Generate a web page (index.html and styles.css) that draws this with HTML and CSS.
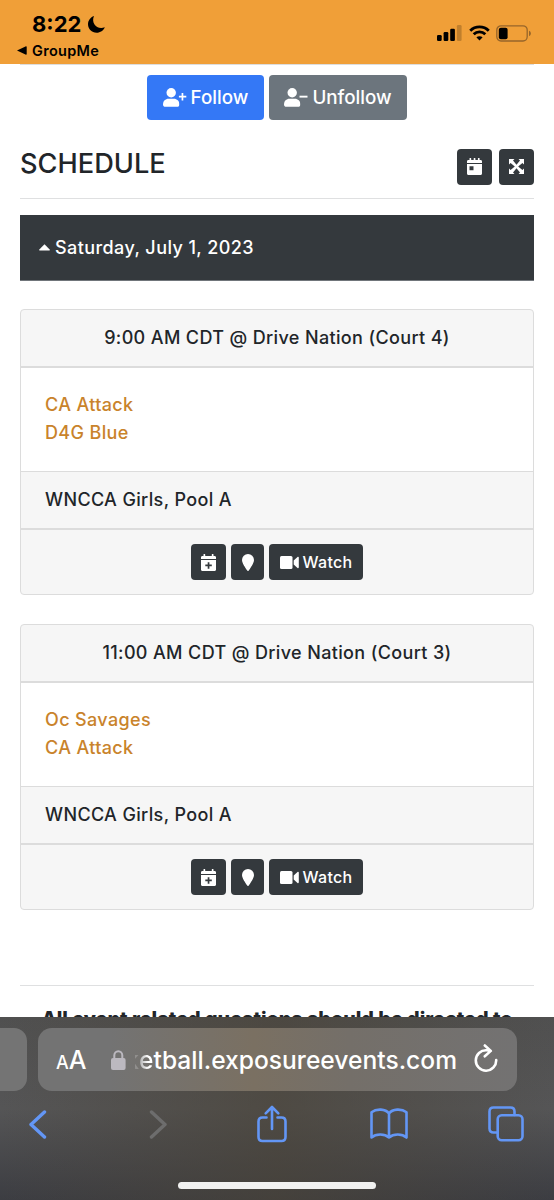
FILE: index.html
```html
<!DOCTYPE html>
<html lang="en">
<head>
    <meta charset="UTF-8">
    <meta name="viewport" content="width=device-width, initial-scale=1.0">
    <title>Schedule</title>
    <link rel="stylesheet" href="styles.css">
</head>
<body>
    <svg class="sprite">
        <symbol id="user" viewBox="0 0 16.400 19"><circle cx="8.200" cy="4.700" r="4.700"/><path d="M0 16.500C0 13 2.500 10.800 5.500 10.800h5.400c3 0 5.500 2.200 5.500 5.700 0 1.500-1 2.300-2.300 2.300H2.300C1 18.800 0 18 0 16.500z"/></symbol>
        <symbol id="calendar-day" viewBox="0 0 15 17"><path d="M2.500 2V.7a.8.8 0 0 1 1.700 0V2h2.500V.7a.8.8 0 0 1 1.700 0V2h2.500V.7a.8.8 0 0 1 1.700 0V2h.9C14.400 2 15 2.600 15 3.400V5H0V3.400C0 2.600.6 2 1.400 2z"/><path fill-rule="evenodd" d="M0 6h15v9.500c0 .8-.6 1.500-1.500 1.500h-12C.6 17 0 16.300 0 15.500zM2.500 8.200v4h4v-4z"/></symbol>
        <symbol id="calendar-plus" viewBox="0 0 15 17"><path d="M2.500 2V.7a.8.8 0 0 1 1.700 0V2h6.600V.7a.8.8 0 0 1 1.700 0V2h1.100C14.400 2 15 2.600 15 3.400V5H0V3.400C0 2.600.6 2 1.400 2z"/><path fill-rule="evenodd" d="M0 6h15v9.500c0 .8-.6 1.500-1.500 1.500h-12C.6 17 0 16.300 0 15.500zM6.700 8.200v2.400H4.300v1.700h2.400v2.400h1.700v-2.400h2.400v-1.700H8.400V8.200z"/></symbol>
        <symbol id="marker" viewBox="0 0 12 17"><path d="M6 0a6 6 0 0 1 6 6c0 3-3.500 8-5.200 10.500a1 1 0 0 1-1.600 0C3.500 14 0 9 0 6a6 6 0 0 1 6-6z"/></symbol>
        <symbol id="video" viewBox="0 0 19 13"><rect width="12.500" height="13" rx="1.500"/><path d="M13.700 4.500 17.500 1.100c.6-.5 1.300-.2 1.300.6v9.600c0 .8-.7 1.100-1.300.6l-3.800-3.400z"/></symbol>
    </svg>

    <header class="status-bar">
        <div class="status-left">
            <div class="time">8:22
                <svg class="moon" viewBox="0 0 17 17"><path d="M6 0C2.400 1.300 0 4.600 0 8.300 0 13 3.800 16.800 8.600 16.800c3.800 0 6.900-2.300 8.200-5.500C9 14 2.800 7.500 6 0z"/></svg>
            </div>
            <div class="back-app"><svg viewBox="0 0 10 9"><path d="M0 4.500 8.500.4c.8-.4 1.200-.1 1.200.6v7c0 .7-.5 1-1.200.6z"/></svg>GroupMe</div>
        </div>
        <div class="status-right">
            <svg class="signal" viewBox="0 0 25 16"><rect y="10" width="4.700" height="6" rx="1.200"/><rect x="6.600" y="7" width="4.700" height="9" rx="1.200"/><rect x="13.200" y="3.700" width="4.700" height="12.300" rx="1.200"/><rect class="faded" x="19.900" y="0" width="4.700" height="16" rx="1.200"/></svg>
            <svg class="wifi" viewBox="0 0 22 16"><path d="M1.300 5.600a13.800 13.800 0 0 1 19.400 0M4.900 9.300a8.700 8.700 0 0 1 12.200 0"/><path class="dot" d="M11 15.900 7.700 12.500c2-1.600 4.600-1.600 6.600 0z"/></svg>
            <svg class="battery" viewBox="0 0 36 17"><rect class="shell" x=".8" y=".8" width="30.400" height="15.200" rx="4.200"/><rect x="2.800" y="2.800" width="8.800" height="11.400" rx="2"/><path class="tip" d="M33 5.700c2.500 1 2.500 4.400 0 5.400z"/></svg>
        </div>
    </header>

    <main class="page">
        <div class="follow-buttons">
            <button class="btn btn-primary"><svg class="icon-user" viewBox="0 0 24 19"><use href="#user" width="16.400" height="19"/><path d="M18.600 4.900h1.700V7.700h3v1.700h-3v3h-1.700v-3h-2.700V7.700h2.700V4.900z"/></svg>Follow</button>
            <button class="btn btn-secondary"><svg class="icon-user" viewBox="0 0 24 19"><use href="#user" width="16.400" height="19"/><path d="M15.500 7.700h8v1.900h-8z"/></svg>Unfollow</button>
        </div>

        <div class="heading">
            <h1>SCHEDULE</h1>
            <div class="heading-buttons">
                <button class="btn-sm square" aria-label="Calendar"><svg class="icon-calendar"><use href="#calendar-day"/></svg></button>
                <button class="btn-sm square" aria-label="Expand"><svg class="icon-expand" viewBox="0 0 15 15"><path d="M0 0h5.500L4 1.600l3.500 4.200L11 1.600 9.500 0H15v5.500L13.400 4 9.200 7.500l4.200 3.500L15 9.500V15H9.500l1.500-1.600-3.500-4.200L4 13.400 5.500 15H0V9.500L1.600 11l4.200-3.500L1.600 4 0 5.500z"/></svg></button>
            </div>
        </div>

        <div class="date-bar"><svg viewBox="0 0 11 7"><path d="M5.500.3 10.700 5.600c.4.500.2 1-.4 1H.7c-.6 0-.8-.5-.4-1z"/></svg>Saturday, July 1, 2023</div>

        <section class="card">
            <div class="card-header">9:00 AM CDT @ Drive Nation (Court 4)</div>
            <div class="card-body">
                <a>CA Attack</a>
                <a>D4G Blue</a>
            </div>
            <div class="card-division">WNCCA Girls, Pool A</div>
            <div class="card-footer">
                <button class="btn-sm square" aria-label="Add"><svg class="icon-calendar"><use href="#calendar-plus"/></svg></button>
                <button class="btn-sm pin" aria-label="Map"><svg class="icon-marker"><use href="#marker"/></svg></button>
                <button class="btn-sm watch"><svg class="icon-video"><use href="#video"/></svg>Watch</button>
            </div>
        </section>

        <section class="card">
            <div class="card-header">11:00 AM CDT @ Drive Nation (Court 3)</div>
            <div class="card-body">
                <a>Oc Savages</a>
                <a>CA Attack</a>
            </div>
            <div class="card-division">WNCCA Girls, Pool A</div>
            <div class="card-footer">
                <button class="btn-sm square" aria-label="Add"><svg class="icon-calendar"><use href="#calendar-plus"/></svg></button>
                <button class="btn-sm pin" aria-label="Map"><svg class="icon-marker"><use href="#marker"/></svg></button>
                <button class="btn-sm watch"><svg class="icon-video"><use href="#video"/></svg>Watch</button>
            </div>
        </section>

        <p class="questions">All event related questions should be directed to</p>
    </main>

    <footer class="browser-bar">
        <div class="tabs">
            <div class="tab-previous"></div>
            <div class="address">
                <span class="text-size"><small>A</small>A</span>
                <svg class="lock" viewBox="0 0 15 20"><rect y="8" width="14.600" height="12" rx="2"/><path d="M3.300 9V5.500a4 4.300 0 0 1 8 0V9"/></svg>
                <span class="url"><span class="url-cut">k</span><span class="url-fade">e</span>tball.exposureevents.com</span>
                <svg class="reload" viewBox="0 0 24 28"><path d="M12.500 6.300A10.200 10.200 0 1 0 22.200 16M10.800 1.500l6 5.400-6 5.400M16.500 6.800l-4-.5"/></svg>
            </div>
        </div>
        <nav class="tools">
            <svg class="chevron" viewBox="0 0 18 29"><path d="M15.500 2 2 14.500 15.500 27"/></svg>
            <svg class="chevron disabled" viewBox="0 0 18 29"><path d="M2.500 2 16 14.500 2.500 27"/></svg>
            <svg class="share" viewBox="0 0 30 38"><path d="M9.500 12.500H5.500c-2.600 0-4 1.400-4 4v15.500c0 2.600 1.400 4 4 4h19c2.600 0 4-1.400 4-4V16.500c0-2.600-1.400-4-4-4h-4M15 24V2M8.700 8.300 15 2l6.300 6.300"/></svg>
            <svg class="book" viewBox="0 0 38 32"><path d="M19 5.500C15.500.7 6.500.5 1.500 4.200v25.300c4.500-4 13-4 17.500 0 4.500-4 13-4 17.500 0V4.200C31.500.5 22.500.7 19 5.500zM19 5.500v24"/></svg>
            <svg class="windows" viewBox="0 0 36 36"><rect x="9.700" y="9.200" width="24.800" height="25" rx="4"/><path d="M9.500 26.500h-4c-2.600 0-4-1.400-4-4v-17c0-2.600 1.400-4 4-4h17c2.600 0 4 1.400 4 4v3.500"/></svg>
        </nav>
        <div class="home-indicator"></div>
    </footer>
</body>
</html>
```
FILE: styles.css
```css
:root {
    --orange: #f09f38;
    --dark: #34393d;
    --link: #c9832b;
    --text-color: #212529;
    --border: #dcdcdc;
    --blue: #6396f5;
}

* {
    box-sizing: border-box;
}

body {
    font-family: Inter, "Liberation Sans", sans-serif;
    font-size: 18px;
    font-weight: 500;
    color: var(--text-color);
    background-color: white;
    margin: 0;
    height: 1200px;
    display: flex;
    flex-direction: column;
    overflow: hidden;
}

svg {
    display: block;
    flex: none;
    fill: currentColor;
}

.sprite {
    display: none;
}

.status-bar {
    height: 64px;
    flex: none;
    background-color: var(--orange);
    color: black;
    display: flex;
    justify-content: space-between;
    padding: 12px 22px 0 17px;
}

.time {
    display: flex;
    align-items: center;
    gap: 7px;
    height: 24px;
    padding-left: 15px;
    font-size: 22px;
    font-weight: 700;
}

.moon {
    width: 17px;
    height: 17px;
}

.back-app {
    display: flex;
    align-items: center;
    gap: 5px;
    height: 20px;
    margin-top: 4px;
    font-size: 14.5px;
    font-weight: 600;
    letter-spacing: 0.3px;
}

.back-app svg {
    width: 10px;
    height: 9px;
}

.status-right {
    display: flex;
    align-items: center;
    height: 42px;
    gap: 6.5px;
}

.signal {
    width: 25px;
    height: 16px;
}

.faded {
    opacity: 0.2;
}

.wifi {
    width: 21px;
    height: 16px;
    fill: none;
    stroke: black;
    stroke-width: 3;
}

.wifi .dot {
    fill: black;
    stroke: none;
}

.battery {
    width: 36px;
    height: 17px;
}

.shell {
    fill: none;
    stroke: #96652a;
    stroke-width: 1.3;
}

.tip {
    fill: #96652a;
}

.page {
    flex: 1;
    min-height: 0;
    overflow: hidden;
    padding: 0 20px;
}

.follow-buttons {
    display: flex;
    justify-content: center;
    gap: 5px;
    border-top: 1px solid #ddd;
    padding-top: 10px;
}

button {
    display: flex;
    align-items: center;
    justify-content: center;
    border: none;
    padding: 0;
    font-family: inherit;
    font-weight: 500;
    color: white;
    border-radius: 4px;
}

.btn {
    height: 45px;
    font-size: 18.8px;
    gap: 4px;
}

.btn-primary {
    width: 117px;
    background-color: #3478f6;
}

.btn-secondary {
    width: 138px;
    background-color: #6c757d;
}

.icon-user {
    width: 24px;
    height: 19px;
}

.heading {
    display: flex;
    align-items: center;
    justify-content: space-between;
    margin-top: 29px;
    height: 50px;
    padding-bottom: 14px;
    border-bottom: 1px solid #dfe0e1;
}

h1 {
    margin: 0 0 5px;
    font-size: 27.2px;
    font-weight: 500;
    line-height: 32px;
}

.heading-buttons {
    display: flex;
    gap: 7px;
}

.btn-sm {
    height: 36px;
    background-color: var(--dark);
    font-size: 16px;
    letter-spacing: 0.3px;
}

.square {
    width: 35px;
}

.pin {
    width: 33px;
}

.watch {
    width: 94px;
    gap: 4px;
}

.icon-calendar {
    width: 15px;
    height: 17px;
}

.icon-expand {
    width: 15px;
    height: 15px;
}

.icon-marker {
    width: 12px;
    height: 17px;
}

.icon-video {
    width: 19px;
    height: 13px;
}

.date-bar {
    display: flex;
    align-items: center;
    gap: 5px;
    height: 66px;
    margin-top: 16px;
    padding-left: 19px;
    background-color: var(--dark);
    border-bottom: 1px solid #70757a;
    color: white;
    letter-spacing: 0.42px;
}

.date-bar svg {
    width: 11px;
    height: 7px;
}

.card {
    display: flex;
    flex-direction: column;
    height: 286px;
    margin-top: 28px;
    border: 1px solid var(--border);
    border-radius: 4px;
    background-color: #f6f6f6;
    letter-spacing: 0.36px;
    overflow: hidden;
}

.card + .card {
    margin-top: 29px;
}

.card-header {
    height: 58px;
    line-height: 56px;
    text-align: center;
    border-bottom: 2px solid var(--border);
}

.card-body {
    display: flex;
    flex-direction: column;
    height: 104px;
    padding: 23px 24px 0;
    line-height: 28px;
    background-color: white;
    border-bottom: 1px solid var(--border);
    color: var(--link);
}

.card-division {
    height: 58px;
    line-height: 55px;
    padding-left: 24px;
    border-bottom: 2px solid var(--border);
}

.card-footer {
    display: flex;
    justify-content: center;
    gap: 5px;
    padding-top: 14px;
}

.questions {
    margin: 75px 0 0;
    padding-top: 21px;
    border-top: 1px solid #dfe0e1;
    font-size: 19.8px;
    font-weight: 800;
    line-height: 24px;
    text-align: center;
    white-space: nowrap;
}

.browser-bar {
    height: 183px;
    flex: none;
    background: linear-gradient(90deg, rgba(74, 67, 55, 0), rgba(74, 67, 55, 0.6) 50%, rgba(74, 67, 55, 0)), linear-gradient(#505050 0%, #555556 50%, #3c3d42 100%);
    padding-top: 11px;
}

.tabs {
    display: flex;
    gap: 11px;
}

.tab-previous {
    width: 27px;
    height: 63px;
    background-color: #747474;
    border-radius: 0 13px 13px 0;
}

.address {
    display: flex;
    align-items: center;
    width: 479px;
    height: 63px;
    padding-left: 18px;
    border-radius: 14px;
    background: linear-gradient(90deg, #737373 15%, #7a7062 45%, #746f69 65%, #737272);
    color: white;
}

.text-size {
    width: 32px;
    font-size: 25px;
    white-space: nowrap;
}

.text-size small {
    font-size: 18px;
}

.lock {
    width: 15px;
    height: 20px;
    margin-left: 23px;
    color: #bcb9c0;
}

.lock path {
    fill: none;
    stroke: currentColor;
    stroke-width: 2;
}

.url {
    display: flex;
    width: 322px;
    margin-left: 9px;
    font-size: 24.6px;
    white-space: nowrap;
}

.url-cut {
    display: flex;
    justify-content: flex-end;
    width: 5px;
    overflow: hidden;
    opacity: 0.2;
}

.url-fade {
    color: transparent;
    background: linear-gradient(90deg, #aaa, white 60%);
    background-clip: text;
    -webkit-background-clip: text;
}

.reload {
    width: 24px;
    height: 28px;
    margin-left: 17px;
    margin-bottom: 3px;
    fill: none;
    stroke: white;
    stroke-width: 2.6;
    stroke-linecap: round;
    stroke-linejoin: round;
}

.tools {
    display: grid;
    grid-template-columns: repeat(5, 1fr);
    align-items: center;
    justify-items: center;
    height: 66px;
    margin: 0 -10px 0 -20px;
}

.tools svg {
    fill: none;
    stroke: var(--blue);
    stroke-width: 2.6;
    stroke-linecap: round;
    stroke-linejoin: round;
}

.tools .chevron {
    width: 18px;
    height: 29px;
    stroke-width: 3.4;
}

.tools .disabled {
    stroke: #6d6d6d;
    margin-left: 5px;
}

.share {
    width: 30px;
    height: 38px;
}

.book {
    width: 38px;
    height: 32px;
}

.windows {
    width: 36px;
    height: 36px;
}

.home-indicator {
    width: 198px;
    height: 7px;
    margin: 25px auto 0;
    border-radius: 4px;
    background-color: #f1f1f0;
}
```
